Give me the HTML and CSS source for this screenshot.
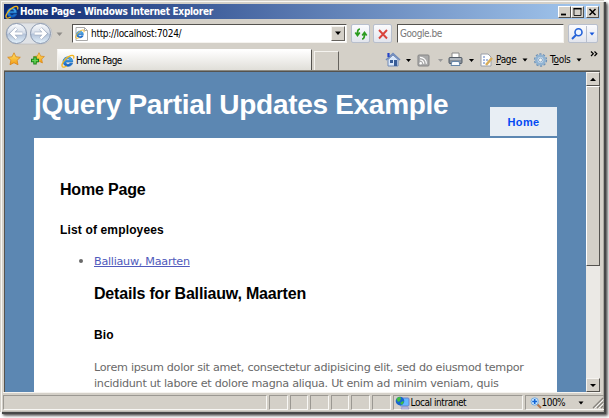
FILE: index.html
```html
<!DOCTYPE html>
<html lang="en">
<head>
<meta charset="utf-8">
<title>Home Page</title>
<link rel="stylesheet" href="styles.css">
</head>
<body>
<svg class="defs" width="0" height="0">
  <defs>
    <linearGradient id="blue" x1="0" y1="0" x2="0" y2="1"><stop offset="0" stop-color="#58c8f8"/><stop offset="1" stop-color="#0a55c4"/></linearGradient>
    <linearGradient id="gold" x1="0" y1="0" x2="0" y2="1"><stop offset="0" stop-color="#ffe66a"/><stop offset="1" stop-color="#f39a12"/></linearGradient>
    <linearGradient id="orb" x1="0" y1="0" x2="0" y2="1"><stop offset="0" stop-color="#fbfcfe"/><stop offset=".48" stop-color="#d5dde9"/><stop offset=".52" stop-color="#b3c2d8"/><stop offset="1" stop-color="#e4f2fc"/></linearGradient>
    <symbol id="ie" viewBox="0 0 16 16">
      <path d="M13.400 9.200H5.400c.1 3 3.800 3.400 4.800 1.500h3c-1.600 5-10.800 4.700-10.800-2.200 0-6.800 11.300-7.200 11 .7zM5.500 7h4.900c-.4-2.500-4.500-2.500-4.900 0z" fill="url(#blue)" stroke="#1765b9" stroke-width=".8"/>
      <path d="M14.200 5.200C15.800 1.500 13.200.4 8.800 3 4 5.800.3 11.400 1.300 14c.8 1.900 3.300.9 5.200-.3" fill="none" stroke="#f3b51c" stroke-width="1.500"/>
    </symbol>
    <symbol id="star" viewBox="0 0 14 14"><path d="M7 .8l1.900 4 4.400.5-3.200 3 .9 4.500L7 10.700l-4 2.100.9-4.500-3.200-3 4.400-.5z" fill="url(#gold)" stroke="#d88418" stroke-width=".8"/></symbol>
  </defs>
</svg>
<div class="window">
  <div class="titlebar">
    <svg class="title-icon" width="14" height="14"><use href="#ie"/></svg>
    <span class="title-text">Home Page - Windows Internet Explorer</span>
    <div class="caption">
      <span class="cap"><svg width="11" height="10"><path d="M2 7.500h5" stroke="#000" stroke-width="1.800"/></svg></span>
      <span class="cap"><svg width="11" height="10"><path d="M2 1.500h7v7H2z" fill="none" stroke="#222"/><path d="M1.500 1.700h8" stroke="#000" stroke-width="1.500"/></svg></span>
      <span class="cap cap-close"><svg width="11" height="10"><path d="M2.500 2l6 6m0-6l-6 6" stroke="#000" stroke-width="1.500"/></svg></span>
    </div>
  </div>

  <div class="navbar">
    <svg class="travel" width="62" height="26" viewBox="0 0 62 26">
      <rect x="1" y="2" width="46" height="21" rx="10.500" fill="#dfe2e6" stroke="#b5b7bb" stroke-width=".6"/>
      <circle cx="11.500" cy="12.500" r="10" fill="url(#orb)" stroke="#8997ad"/>
      <circle cx="35.500" cy="12.500" r="10" fill="url(#orb)" stroke="#8997ad"/>
      <path d="M17.500 12.500h-11m5-5l-5 5 5 5" fill="none" stroke="#8d9bb2" stroke-width="3.600"/>
      <path d="M17.500 12.500h-11m5-5l-5 5 5 5" fill="none" stroke="#fff" stroke-width="2.500"/>
      <path d="M29.500 12.500h11m-5-5l5 5-5 5" fill="none" stroke="#8d9bb2" stroke-width="3.600"/>
      <path d="M29.500 12.500h11m-5-5l5 5-5 5" fill="none" stroke="#fff" stroke-width="2.500"/>
      <path d="M51.500 11.500h6l-3 3.500z" fill="#8e8c88"/>
    </svg>
    <div class="address">
      <svg width="13" height="14" viewBox="0 0 13 14"><path d="M1 .5h8.500l3 3v10H1z" fill="#fff" stroke="#aaa"/><path d="M9.500.5v3h3" fill="none" stroke="#aaa"/><use href="#ie" x="0" y="2" width="10" height="10"/></svg>
      <span class="ui url">http://localhost:7024/</span>
      <span class="drop"><svg width="8" height="5"><path d="M1 .5h6L4 4z"/></svg></span>
    </div>
    <span class="tool refresh"><svg width="14" height="14" viewBox="0 0 14 14"><path d="M6 2C4 2 3.500 3.500 3.500 7M1.300 5.500l2.200 3 2.300-3M8 12c2 0 2.500-1.500 2.500-5M8.200 8.500l2.300-3 2.200 3" fill="none" stroke="#2c9c20" stroke-width="1.700"/></svg></span>
    <span class="tool stop"><svg width="14" height="14" viewBox="0 0 14 14"><path d="M3 3l8 8.500M11 3l-8 8.500" stroke="#d9443c" stroke-width="1.900"/></svg></span>
    <div class="search"><span class="ui google">Google.be</span></div>
    <span class="tool go"><svg width="29" height="16" viewBox="0 0 29 16"><path d="M17.500 0v16" stroke="#b8bfcd"/><circle cx="9.500" cy="6.300" r="3.500" fill="#eef5ff" stroke="#2462d8" stroke-width="1.600"/><path d="M7 9l-4 4" stroke="#2462d8" stroke-width="2"/><path d="M20.500 6.500h5L23 9.500z" fill="#1757dc"/></svg></span>
  </div>

  <div class="tabbar">
    <div class="favs">
      <svg width="14" height="14"><use href="#star"/></svg>
      <svg width="15" height="14" viewBox="0 0 15 14"><use href="#star" x="3" y="0" width="12" height="12"/><path d="M5 4.500v8M1 8.500h8" stroke="#16831a" stroke-width="3.400"/><path d="M5 5.500v6M2 8.500h6" stroke="#65d553" stroke-width="1.500"/></svg>
    </div>
    <div class="tab"><svg width="14" height="14"><use href="#ie"/></svg><span class="ui tab-text">Home Page</span></div>
    <div class="newtab"></div>
    <svg class="commands" width="60" height="18" viewBox="0 0 60 18">
      <path d="M3 8.500L8 4l5 4.500V15H3z" fill="#d9e7fa" stroke="#7089b5"/><path d="M1 9l7-6.500L15 9" fill="none" stroke="#6c89bd" stroke-width="1.600"/><path d="M3.500 6V2" stroke="#2443c8" stroke-width="2.200"/><path d="M5 9h3v3H5zM9 9h3v6H9z" fill="#385c97"/>
      <path d="M21 8h5l-2.500 3z"/>
      <rect x="33" y="4" width="11" height="11" rx="1" fill="#aaa" stroke="#858585"/><circle cx="35.700" cy="12.300" r="1.200" fill="#fff"/><path d="M35 9a3.500 3.500 0 013.700 3.700M35 6.300a6.300 6.300 0 016.400 6.400" fill="none" stroke="#fff" stroke-width="1.200"/>
      <path d="M53 8h5l-2.500 3z" fill="#999"/>
    </svg>
    <svg class="print" width="28" height="18" viewBox="0 0 28 18">
      <path d="M4 2h7v5H4z" fill="#fff" stroke="#888"/><rect x="1" y="6.500" width="13" height="6" rx="1" fill="#89919b" stroke="#555e68"/><path d="M2 8h11" stroke="#d8dde1"/><path d="M4 10.500h7l1 4H3z" fill="#f8fbff" stroke="#6686a8"/>
      <path d="M21 8h5l-2.500 3z"/>
    </svg>
    <svg class="page-icon" width="15" height="16" viewBox="0 0 15 16"><path d="M2 2h7l3 3v9H2z" fill="#fff" stroke="#9a9fa9"/><path d="M4 5h3M4 8h5M4 11h3" stroke="#5277bf" stroke-dasharray="2 1"/><path d="M7 13l6-7" stroke="#d9ae5b" stroke-width="2.500"/></svg>
    <span class="ui cmd page-label"><u>P</u>age</span>
    <svg class="arrow" width="6" height="4"><path d="M.5.5h5L3 3.500z"/></svg>
    <svg class="gear" width="15" height="16" viewBox="0 0 15 16"><circle cx="7.500" cy="8" r="5.900" fill="none" stroke="#6d91b7" stroke-width="1.500" stroke-dasharray="2.200 1.500"/><circle cx="7.500" cy="8" r="4.200" fill="#d4e4f2" stroke="#91b3d2" stroke-width="2.600"/><circle cx="7.500" cy="8" r="2" fill="#f0f2ef" stroke="#6d91b7" stroke-width=".7"/></svg>
    <span class="ui cmd tools-label">T<u>o</u>ols</span>
    <svg class="arrow" width="6" height="4"><path d="M.5.5h5L3 3.500z"/></svg>
    <svg class="more" width="8" height="6"><path d="M1 .5l2.300 2.300L1 5M4.500.5l2.300 2.300L4.500 5" fill="none" stroke="#000" stroke-width="1.200"/></svg>
  </div>

  <div class="viewport">
    <main class="site">
      <header class="site-header">
        <h1>jQuery Partial Updates Example</h1>
        <nav><a class="menu">Home</a></nav>
      </header>
      <section class="sheet">
        <h2>Home Page</h2>
        <h3>List of employees</h3>
        <ul><li><a class="employee">Balliauw, Maarten</a>
          <h2 class="details">Details for Balliauw, Maarten</h2>
          <h3 class="bio">Bio</h3>
          <p>Lorem ipsum dolor sit amet, consectetur adipisicing elit, sed do eiusmod tempor<br>incididunt ut labore et dolore magna aliqua. Ut enim ad minim veniam, quis</p>
        </li></ul>
      </section>
    </main>
    <div class="scrollbar">
      <span class="scroll-button"><svg width="8" height="5"><path d="M1 4h6L4 .8z"/></svg></span>
      <span class="thumb"></span>
      <span class="scroll-button scroll-down"><svg width="8" height="5"><path d="M1 1h6L4 4z"/></svg></span>
    </div>
  </div>

  <footer class="status">
    <span class="panel message"></span><span class="panel"></span><span class="panel"></span><span class="panel"></span><span class="panel"></span><span class="panel"></span><span class="panel"></span>
    <span class="panel zone"><svg width="15" height="14" viewBox="0 0 15 14"><rect x="5" y="2" width="9" height="8" rx="1" fill="#64b8ff" stroke="#6b7fce"/><path d="M7 11h6l1 2H6z" fill="#c4c1e9" stroke="#8b87be" stroke-width=".6"/><circle cx="5" cy="5" r="4.300" fill="#1766cd"/><path d="M1.500 3c2-3 4-2 4.500-1l-1 3-2 1zM5 7l3-2 1 1-2 3z" fill="#43bd42"/></svg><span class="ui zone-text">Local intranet</span></span>
    <span class="panel zoom"><svg width="12" height="12" viewBox="0 0 12 12"><path d="M7 7l4 4" stroke="#b5764b" stroke-width="2"/><circle cx="4.700" cy="4.500" r="3.700" fill="#cdeaff" stroke="#76a8dc"/><path d="M4.700 2v5M2.200 4.500h5" stroke="#1464d5" stroke-width="1.600"/></svg><span class="ui zoom-text">100%</span><svg class="zoom-arrow" width="6" height="4"><path d="M.5.5h5L3 3.500z"/></svg><svg class="grip" width="12" height="12"><path d="M1 11L11 1M5 11l6-6M9 11l2-2" stroke="#85827c" stroke-width="1.200"/><path d="M2.500 11.500l9-9M6.500 11.500l5-5" stroke="#fff" stroke-width=".8"/></svg></span>
  </footer>
</div>
</body>
</html>
```

FILE: styles.css
```css
* { box-sizing: border-box; }
html, body { margin: 0; width: 609px; height: 418px; overflow: hidden; }
body { background: #fff; font-family: "DejaVu Sans", Verdana, sans-serif; }
svg { display: block; flex: none; }
.defs { position: absolute; }

.window {
  width: 604px; height: 412px; padding: 4px 3px 0 4px;
  display: flex; flex-direction: column;
  background: #d4d0c8;
  box-shadow: inset 1px 1px #d4d0c8, inset 2px 2px #f8f7f4, inset -1px 0 #aaa7a0, inset 0 -1px #bbb8b1, 2px 2px 0 #484848, 3px 3px 2px #555, 4px 4px 3px #999;
}
.ui { font: 10px "DejaVu Sans Condensed", "DejaVu Sans", sans-serif; letter-spacing: -.53px; color: #000; white-space: nowrap; }

.titlebar { height: 15px; margin-right: 1px; display: flex; align-items: center; background: linear-gradient(90deg, #0c2871, #a6caf0); }
.title-icon { width: 14px; margin-left: 1px; }
.title-text { margin-left: 1px; color: #fff; font: bold 10px "DejaVu Sans Condensed", sans-serif; letter-spacing: -.28px; white-space: nowrap; }
.caption { margin-left: auto; display: flex; padding-right: 1px; }
.cap { width: 13px; height: 12px; background: #d4d0c8; border: 1px solid; border-color: #fff #55534f #55534f #fff; }
.cap-close { margin-left: 2px; }

.navbar { height: 29px; display: flex; align-items: center; }
.travel { margin: 0 4px 0 1px; }
.address { width: 275px; height: 19px; margin-left: 1px; padding: 0 1px 0 2px; display: flex; align-items: center; background: #fff; border: 1px solid; border-color: #55534f #f5f3ef #f5f3ef #55534f; }
.url { margin-left: 3px; letter-spacing: -.3px; }
.drop { width: 14px; height: 15px; margin-left: auto; display: grid; place-items: center; background: #d4d0c8; border: 1px solid; border-color: #f5f3ef #66635e #66635e #f5f3ef; }
.tool { width: 19px; height: 19px; display: grid; place-items: center; flex: none; border: 1px solid #b8bfcd; border-radius: 2px; background: linear-gradient(#fbfbfd, #e2e5ed); }
.refresh { margin-left: 4px; }
.stop { margin-left: 3px; }
.search { width: 167px; height: 19px; margin-left: 5px; display: flex; align-items: center; background: #fff; border: 1px solid; border-color: #55534f #f5f3ef #f5f3ef #55534f; }
.google { margin-left: 2px; color: #777; letter-spacing: -.45px; }
.go { width: 30px; margin-left: 4px; }

.tabbar { height: 23px; display: flex; align-items: center; }
.favs { width: 53px; padding: 0 0 2px 3px; display: flex; gap: 9px; }
.tab { width: 255px; height: 22px; align-self: flex-end; display: flex; align-items: center; padding-left: 3px; background: linear-gradient(#fff, #dfddd7); border-top: 1px solid #fff; border-right: 1px solid #55534f; border-left: 1px solid #f5f3ef; }
.tab-text { margin-left: 1px; letter-spacing: -.6px; }
.newtab { width: 25px; height: 20px; margin-left: 2px; align-self: flex-end; border: 1px solid; border-color: #f5f3ef #66635e transparent #f5f3ef; }
.commands { margin-left: 46px; }
.print { margin-left: 3px; }
.page-icon { margin-left: 3px; }
.cmd { width: 21px; margin-left: 2px; }
.page-label { letter-spacing: -.35px; }
.tools-label { letter-spacing: -.3px; }
.arrow { margin-left: 5px; }
.gear { margin-left: 5px; }
.more { margin: 0 0 11px 8px; }

.viewport { height: 321px; margin-right: 1px; display: flex; border: 1px solid; border-width: 1px 0 0 1px; border-color: #55534f; box-shadow: 0 -1px #888780; overflow: hidden; }
.site { flex: 1; height: 320px; padding: 0 29px; background: #5c87b2; }
.site-header { height: 66px; display: flex; justify-content: space-between; }
h1, h2, h3, p, ul { margin: 0; }
h1 { margin-top: 16px; font: bold 28px/34px "Liberation Sans", Arial, sans-serif; letter-spacing: -.3px; color: #fff; white-space: nowrap; }
.menu { width: 67px; height: 29px; margin-top: 35px; display: grid; place-items: center; background: #e8eef4; color: #034af3; font: bold 11px "Liberation Sans", Arial, sans-serif; letter-spacing: .35px; }
.sheet { height: 254px; padding: 41px 25px 0 26px; background: #fff; overflow: hidden; }
h2 { font: bold 16px/22px "Liberation Sans", Arial, sans-serif; letter-spacing: -.18px; color: #000; white-space: nowrap; }
h3 { margin-top: 20px; font: bold 12px/18px "Liberation Sans", Arial, sans-serif; letter-spacing: .15px; color: #000; }
ul { margin-top: 13px; padding-left: 34px; color: #696969; font-size: 11.200px; line-height: 16px; }
li::marker { font-size: 14px; }
.employee { color: #505abc; text-decoration: underline; letter-spacing: -.27px; }
.details { margin-top: 13px; }
.bio { margin-top: 21px; }
p { margin-top: 16px; font-size: 11.200px; line-height: 16px; letter-spacing: -.28px; white-space: nowrap; }

.scrollbar { width: 14px; height: 320px; display: flex; flex-direction: column; background: #ebe9e5; }
.scroll-button { height: 14px; display: grid; place-items: center; background: #d4d0c8; border: 1px solid; border-color: #f5f3ef #55534f #55534f #f5f3ef; }
.thumb { height: 180px; background: #d4d0c8; border: 1px solid; border-color: #fff #55534f #55534f #fff; }
.scroll-down { margin-top: auto; }

.status { height: 18px; margin-left: -1px; padding-top: 2px; display: flex; gap: 2px; border-top: 1px solid #f5f3ef; }
.panel { width: 18.600px; height: 15px; flex: none; border: 1px solid; border-color: #9b9892 #f8f7f4 #f8f7f4 #9b9892; }
.message { width: 264px; }
.zone { width: 130px; display: flex; align-items: center; padding-left: 1px; }
.zone-text { margin-left: 1px; letter-spacing: -.45px; }
.zoom { width: 79px; display: flex; align-items: center; padding-left: 4px; border-right: 0; }
.zoom-text { margin-left: 0; letter-spacing: -.55px; }
.zoom-arrow { margin-left: auto; }
.grip { margin-left: 8px; }
```
